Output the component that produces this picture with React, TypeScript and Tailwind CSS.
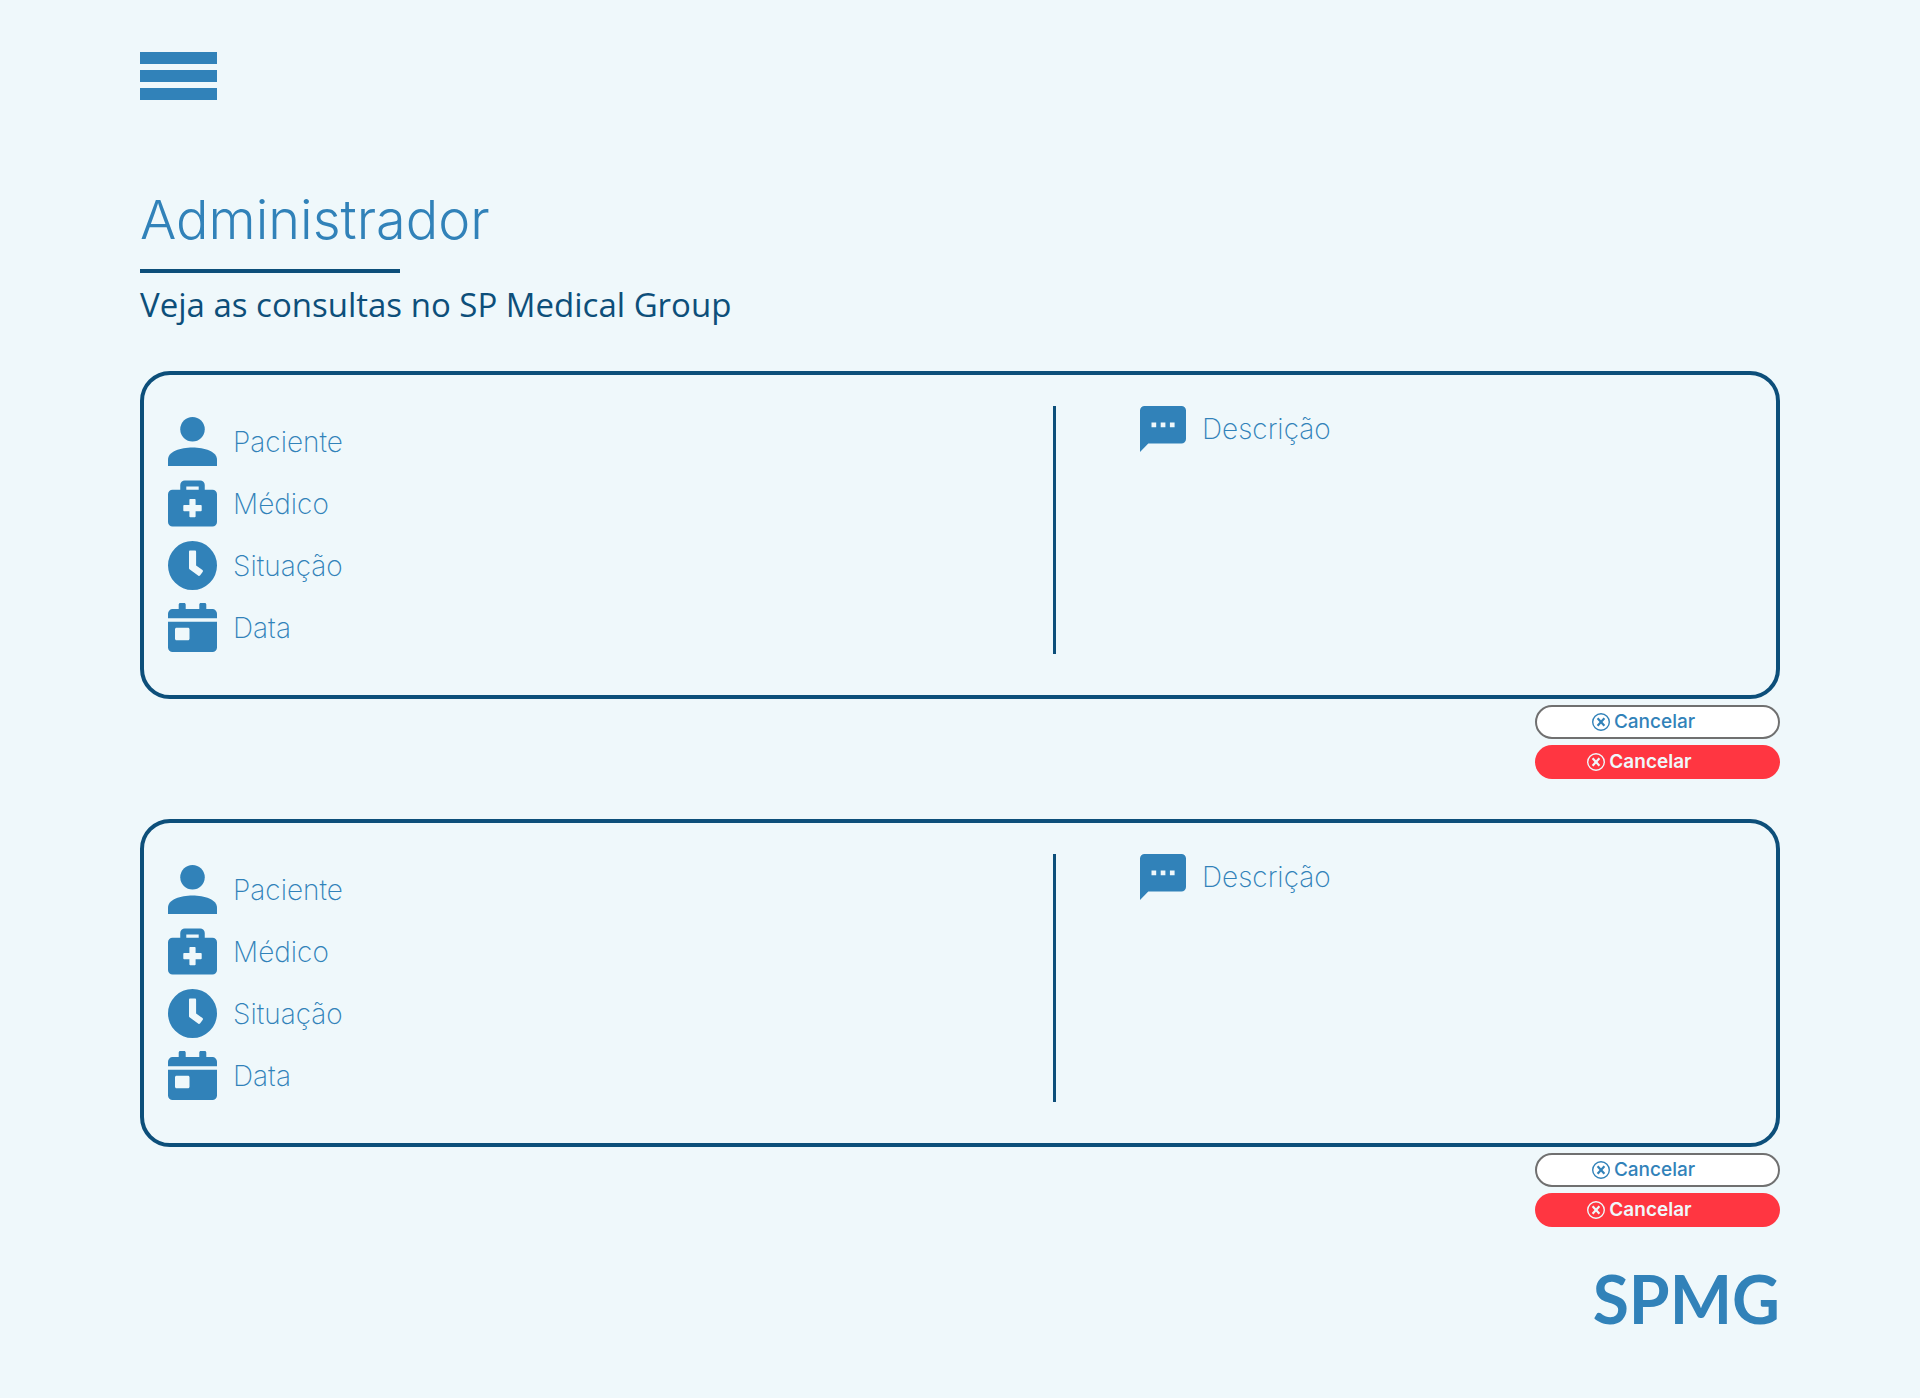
import type { ReactNode } from 'react';

function PersonIcon() {
  return (
    <svg className="h-[49px] w-[49px] shrink-0" viewBox="0 0 49 49" fill="currentColor" aria-hidden="true">
      <circle cx="24.5" cy="12.25" r="12.25" />
      <path d="M0 49v-6.1C0 34.5 12.500 30.600 24.500 30.600S49 34.500 49 42.900V49z" />
    </svg>
  );
}

function MedicalCaseIcon() {
  return (
    <svg className="h-[49px] w-[49px] shrink-0" viewBox="0 0 49 49" fill="currentColor" fillRule="evenodd" aria-hidden="true">
      <path d="M4.600 10.700H12.250V6.100A4.600 4.600 0 0 1 16.850 1.500H32.150A4.600 4.600 0 0 1 36.750 6.100V10.700H44.400A4.600 4.600 0 0 1 49 15.300V42.900A4.600 4.600 0 0 1 44.400 47.500H4.600A4.600 4.600 0 0 1 0 42.900V15.300A4.600 4.600 0 0 1 4.600 10.700zM18.300 7.600V10.700H30.700V7.600zM22.200 19.900a.8.8 0 0 0-.8.8V26H16.100a.8.8 0 0 0-.8.8v4.600c0 .4.400.8.8.8h5.300v5.300c0 .4.400.8.8.8h4.600c.4 0 .8-.4.800-.8v-5.300h5.300c.4 0 .8-.4.800-.8v-4.600c0-.4-.4-.8-.8-.8h-5.300v-5.300a.8.8 0 0 0-.8-.8z" />
    </svg>
  );
}

function ClockIcon() {
  return (
    <svg className="h-[49px] w-[49px] shrink-0" viewBox="0 0 49 49" fill="currentColor" fillRule="evenodd" aria-hidden="true">
      <path d="M24.500 0a24.500 24.500 0 1 0 0 49a24.500 24.500 0 0 0 0-49zM22.200 9.500h4.700c.7 0 1.200.5 1.200 1.200v13.700l6.400 4.700c.5.4.6 1.100.3 1.600l-2.800 3.800c-.4.5-1.100.6-1.600.3l-8.900-6.500a1.200 1.200 0 0 1-.5-1V10.700c0-.7.5-1.200 1.200-1.200z" />
    </svg>
  );
}

function CalendarIcon() {
  return (
    <svg className="h-[49px] w-[49px] shrink-0" viewBox="0 0 49 49" fill="currentColor" fillRule="evenodd" aria-hidden="true">
      <path d="M0 15.300v-4.600a4.600 4.600 0 0 1 4.600-4.600h6.100V1.500c0-.8.700-1.500 1.500-1.500h4c.8 0 1.500.7 1.500 1.500v4.600h13.600V1.500c0-.8.700-1.500 1.500-1.500h4c.8 0 1.500.7 1.500 1.500v4.600h6.100A4.600 4.600 0 0 1 49 10.700v4.600zM0 18.700h49v25.700a4.600 4.600 0 0 1-4.600 4.600H4.600A4.600 4.600 0 0 1 0 44.400zM8.500 24.800c-.8 0-1.500.7-1.500 1.500v9.400c0 .8.700 1.500 1.500 1.500h11.500c.8 0 1.500-.7 1.500-1.500v-9.400c0-.8-.7-1.500-1.500-1.500z" />
    </svg>
  );
}

function MessageIcon() {
  return (
    <svg className="h-[46px] w-[46px] shrink-0" viewBox="0 0 46 46" fill="currentColor" fillRule="evenodd" aria-hidden="true">
      <path d="M4.600 0h36.800A4.600 4.600 0 0 1 46 4.600v28.400a4.600 4.600 0 0 1-4.600 4.600H8.300L0 46V4.600A4.600 4.600 0 0 1 4.600 0zM11.500 16.500v4.700h4.700v-4.700zM20.700 16.500v4.700h4.700v-4.700zM29.900 16.500v4.700h4.700v-4.700z" />
    </svg>
  );
}

function CancelIcon() {
  return (
    <svg className="h-[18px] w-[18px] shrink-0" viewBox="0 0 18 18" fill="none" stroke="currentColor" aria-hidden="true">
      <circle cx="9" cy="9" r="8.300" strokeWidth="1.4" />
      <path d="M5.600 5.300l6.800 7.400M12.400 5.300l-6.800 7.400" strokeWidth="2.200" />
    </svg>
  );
}

function Field({ icon, label }: { icon: ReactNode; label: string }) {
  return (
    <li className="flex items-center gap-4">
      {icon}
      <span className="text-[28px] leading-8 font-extralight">{label}</span>
    </li>
  );
}

function Appointment() {
  return (
    <article className="mb-10">
      <div className="grid grid-cols-[909fr_3px_720fr] rounded-[30px] border-4 border-[#0d4f7a] pt-[31px] pb-[41px]">
        <ul className="flex flex-col gap-[13px] pt-[11px] pb-[2px] pl-6">
          <Field icon={<PersonIcon />} label="Paciente" />
          <Field icon={<MedicalCaseIcon />} label="Médico" />
          <Field icon={<ClockIcon />} label="Situação" />
          <Field icon={<CalendarIcon />} label="Data" />
        </ul>
        <div className="bg-[#0d4f7a]" />
        <ul className="pl-[84px]">
          <Field icon={<MessageIcon />} label="Descrição" />
        </ul>
      </div>
      <div className="mt-[6px] flex flex-col items-end gap-[6px]">
        <button className="flex h-[34px] w-[245px] items-center justify-center gap-1 rounded-full border-2 border-[#707070] bg-white pr-7 text-[19px] leading-6 font-medium">
          <CancelIcon />
          Cancelar
        </button>
        <button className="flex h-[34px] w-[245px] items-center justify-center gap-1 rounded-full bg-[#ff3641] pr-9 text-[19px] leading-6 font-semibold text-[#eff8fb]">
          <CancelIcon />
          Cancelar
        </button>
      </div>
    </article>
  );
}

export default function App() {
  return (
    <div className="min-h-screen bg-[#eff8fb] px-[140px] pt-[52px] font-['Inter',sans-serif] text-[#3182b9]">
      <header>
        <button aria-label="Menu" className="flex w-[77px] flex-col gap-[6px]">
          <span className="h-3 w-full bg-[#3182b9]" />
          <span className="h-3 w-full bg-[#3182b9]" />
          <span className="h-3 w-full bg-[#3182b9]" />
        </button>
      </header>
      <main className="pt-[90px]">
        <h1 className="text-[54px] leading-[60px] font-light">Administrador</h1>
        <div className="mt-[19px] h-1 w-[260px] bg-[#0d4f7a]" />
        <h2 className="mt-3 mb-[46px] font-['Open_Sans',sans-serif] text-[33px] leading-10 font-normal text-[#0d4f7a]">
          Veja as consultas no SP Medical Group
        </h2>
        <Appointment />
        <Appointment />
      </main>
      <footer className="flex justify-end">
        <p className="font-['Lato',sans-serif] text-[66px] leading-[64px] font-bold">SPMG</p>
      </footer>
    </div>
  );
}
